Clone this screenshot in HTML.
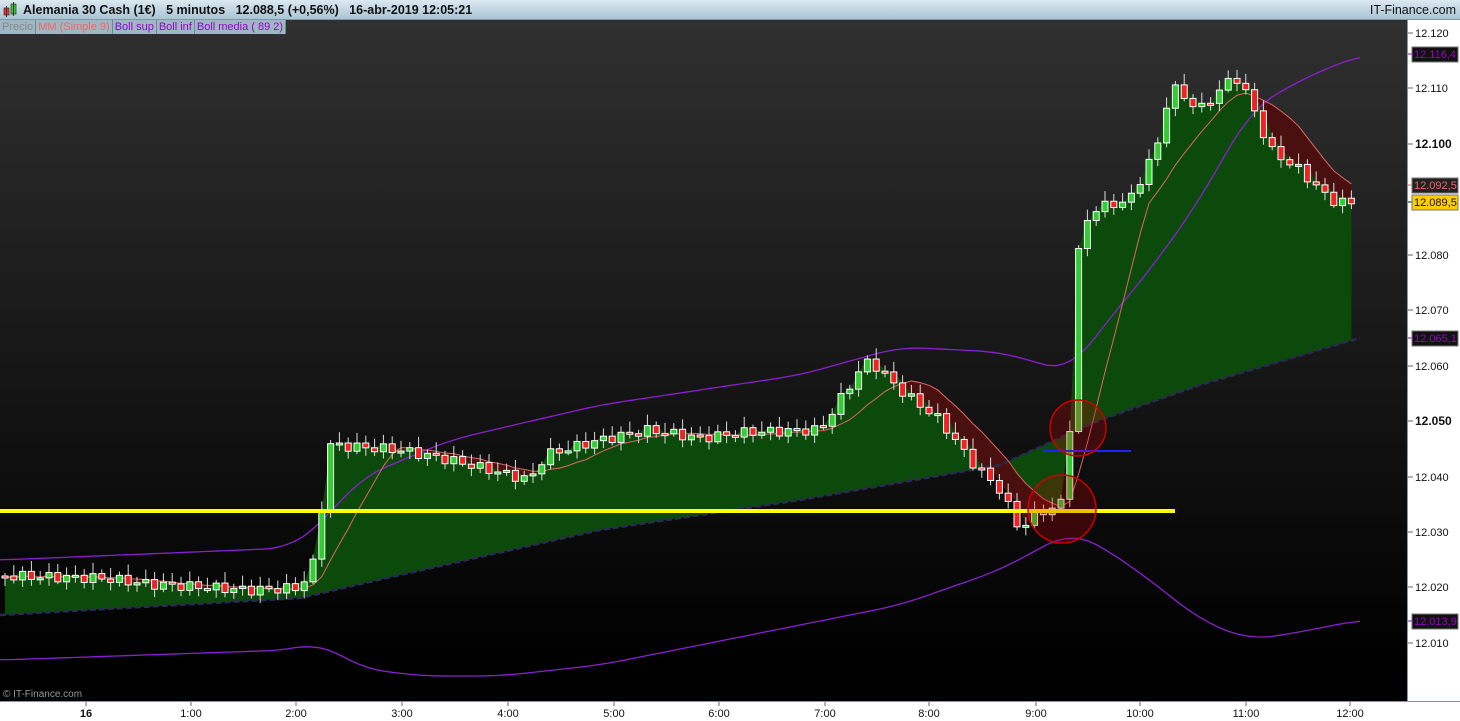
<!DOCTYPE html>
<html><head><meta charset="utf-8"><style>
body{margin:0;width:1460px;height:720px;overflow:hidden;font-family:"Liberation Sans",sans-serif;background:#fff;position:relative}
#hdr{position:absolute;left:0;top:0;width:1460px;height:20px;background:linear-gradient(#dbe9f1,#a9c4d3);border-bottom:1px solid #7d98a8;box-sizing:border-box}
#hdr .t{position:absolute;left:23px;top:3px;font-size:12.5px;font-weight:bold;color:#111;white-space:pre}
#hdr .r{position:absolute;right:4px;top:3px;font-size:12.5px;color:#111}
#leg{position:absolute;left:0;top:20px;height:14px;display:flex;font-size:11px;z-index:3}
#leg span{background:#9fb7c3;border-right:1px solid #6d8795;padding:0 2px;line-height:14px}
#chart{position:absolute;left:0;top:20px;width:1407px;height:682px;background:linear-gradient(#303030,#000 95%)}
#ax{position:absolute;left:1407px;top:20px;width:53px;height:682px;background:#fff;border-left:1px solid #7d98a8}
#bx{position:absolute;left:0;top:701px;width:1460px;height:19px;background:#fff;border-top:1px solid #7d98a8}
svg{position:absolute;left:0;top:0}
</style></head><body>
<div id="chart"></div><div id="ax"></div><div id="bx"></div>
<div id="hdr"><svg width="20" height="20"><rect x="4" y="8" width="5" height="7" fill="#e33" stroke="#333" stroke-width=".7"/><line x1="6.5" y1="6" x2="6.5" y2="17" stroke="#333"/><rect x="11" y="4" width="5" height="10" fill="#3c3" stroke="#333" stroke-width=".7"/><line x1="13.5" y1="2" x2="13.5" y2="16" stroke="#333"/></svg><span class="t">Alemania 30 Cash (1€)   5 minutos   12.088,5 (+0,56%)   16-abr-2019 12:05:21</span><span class="r">IT-Finance.com</span></div>
<div id="leg"><span style="color:#888">Precio</span><span style="color:#e66">MM (Simple 9)</span><span style="color:#90c">Boll sup</span><span style="color:#90c">Boll inf</span><span style="color:#90c">Boll media ( 89 2)</span></div>
<svg id="s" width="1460" height="720"></svg>
<script>
function interp(k,x){for(let i=0;i<k.length-1;i++){if(x<=k[i+1][0]){let a=k[i],b=k[i+1],t=(x-a[0])/(b[0]-a[0]);return a[1]+t*(b[1]-a[1]);}}return k[k.length-1][1];}
function smooth(k){let out=[];for(let x=0;x<=1360;x+=8){let a=0,n=0;for(let d=-24;d<=24;d+=4){a+=interp(k,Math.max(0,Math.min(1360,x+d)));n++;}out.push([x,a/n]);}return out;}
const med=[[0,615],[300,598],[400,575],[600,530],[800,500],[1000,465],[1100,420],[1200,385],[1360,338]];
const sup=smooth([[0,560],[290,548],[320,525],[360,478],[450,440],[600,405],[800,375],[900,347],[1000,352],[1070,372],[1100,330],[1150,270],[1200,200],[1250,110],[1300,80],[1360,55]]);
const inf=smooth([[0,660],[290,650],[320,642],[360,668],[420,676],[500,676],[600,665],[800,625],[900,605],[1000,570],[1070,532],[1100,545],[1150,580],[1200,620],[1250,640],[1300,632],[1360,620]]);
const cl=[[5,576],[100,578],[150,584],[250,590],[300,588],[315,560],[330,445],[400,450],[450,460],[530,480],[545,455],[600,440],[650,430],[700,438],[750,432],[820,430],[860,370],[870,360],[900,390],[940,420],[970,460],[1000,490],[1020,530],[1040,510],[1060,510],[1070,425],[1078,255],[1090,210],[1130,200],[1160,140],[1170,85],[1200,110],[1235,75],[1250,100],[1270,150],[1300,170],[1330,200],[1360,205]];
let s='';const N=[];
for(let x=5;x<=1360;x+=8.8){N.push(x);}
const C=N.map((x,i)=>interp(cl,x)+Math.sin(i*2.3)*5);
const O=C.map((c,i)=>i?C[i-1]:c);
const M=C.map((c,i)=>{let a=0,n=0;for(let j=Math.max(0,i-8);j<=i;j++){a+=C[j];n++;}return a/n;});
function pl(k){return k.map(p=>p.join(',')).join(' ');}
let g=N.map((x,i)=>x+','+Math.min(C[i],O[i])).join(' ');
let gm=N.slice().reverse().map(x=>x+','+interp(med,x)).join(' ');
s+=`<polygon points="${g} ${gm}" fill="#0b4a0b"/>`;
let r=N.map((x,i)=>x+','+M[i]).join(' ');
let rc=N.slice().reverse().map((x,i)=>{let j=N.length-1-i;return x+','+Math.max(M[j],Math.min(C[j],O[j]));}).join(' ');
s+=`<polygon points="${r} ${rc}" fill="#4a1010"/>`;
s+=`<polyline points="${pl(med)}" fill="none" stroke="#2a2a55" stroke-width="2.5" stroke-dasharray="6,3"/>`;
s+=`<polyline points="${pl(sup)}" fill="none" stroke="#8a1fd0" stroke-width="1.3"/>`;
s+=`<polyline points="${pl(inf)}" fill="none" stroke="#8a1fd0" stroke-width="1.3"/>`;
s+=`<polyline points="${r}" fill="none" stroke="#d66" stroke-width="1"/>`;
N.forEach((x,i)=>{let o=O[i],c=C[i],t=Math.min(o,c),b=Math.max(o,c);if(b-t<2)b=t+2;let hi=t-3-Math.abs(Math.sin(i*1.7))*8,lo=b+2+Math.abs(Math.cos(i*1.3))*6;
s+=`<line x1="${x}" y1="${hi}" x2="${x}" y2="${lo}" stroke="#ddd"/>`;
s+=`<rect x="${x-3}" y="${t}" width="6" height="${b-t}" fill="${c<o?'#3c3':'#e22'}" stroke="#fff" stroke-width="1"/>`;});
s+=`<line x1="0" y1="511" x2="1175" y2="511" stroke="#ff0" stroke-width="4"/>`;
s+=`<line x1="1043" y1="451" x2="1131" y2="451" stroke="#22f" stroke-width="2"/>`;
s+=`<circle cx="1078" cy="428" r="28" fill="rgba(200,0,0,.25)" stroke="#c00" stroke-width="1.5"/>`;
s+=`<circle cx="1062" cy="509" r="34" fill="rgba(200,0,0,.25)" stroke="#c00" stroke-width="1.5"/>`;
const labels=[[33,'12.120'],[88,'12.110'],[144,'12.100',1],[255,'12.080'],[310,'12.070'],[366,'12.060'],[421,'12.050',1],[477,'12.040'],[532,'12.030'],[587,'12.020'],[643,'12.010']];
labels.forEach(l=>{s+=`<line x1="1408" y1="${l[0]}" x2="1413" y2="${l[0]}" stroke="#666"/><text x="1415" y="${l[0]+4}" font-size="${l[2]?12:11}" font-weight="${l[2]?'bold':'normal'}" fill="#111">${l[1]}</text>`;});
[[54,'12.116,4','#111','#90c'],[185,'12.092,5','#222','#e66'],[202,'12.089,5','#fc0','#111'],[338,'12.065,1','#111','#90c'],[621,'12.013,9','#111','#90c']].forEach(t=>{s+=`<line x1="1408" y1="${t[0]}" x2="1413" y2="${t[0]}" stroke="${t[3]}"/><rect x="1412" y="${t[0]-7}" width="46" height="15" fill="${t[2]}" stroke="#777"/><text x="1414" y="${t[0]+4}" font-size="11" fill="${t[3]}">${t[1]}</text>`;});
[[86,'16',1],[191,'1:00'],[296,'2:00'],[402,'3:00'],[508,'4:00'],[614,'5:00'],[719,'6:00'],[825,'7:00'],[929,'8:00'],[1036,'9:00'],[1140,'10:00'],[1246,'11:00'],[1350,'12:00']].forEach(t=>{s+=`<line x1="${t[0]}" y1="702" x2="${t[0]}" y2="706" stroke="#666"/><text x="${t[0]}" y="717" font-size="11" text-anchor="middle" font-weight="${t[2]?'bold':'normal'}" fill="#111">${t[1]}</text>`;});
s+=`<text x="3" y="697" font-size="10" fill="#999">© IT-Finance.com</text>`;
document.getElementById('s').innerHTML=s;
</script>
</body></html>
